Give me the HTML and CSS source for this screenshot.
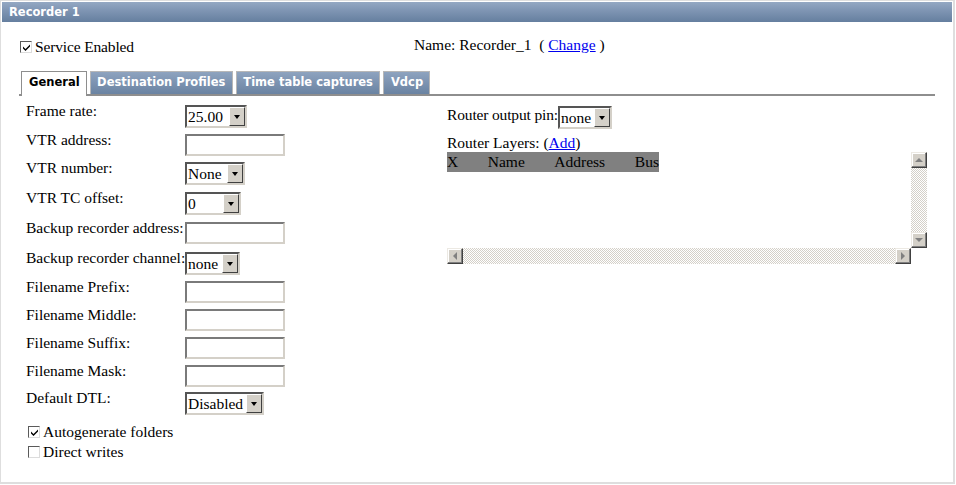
FILE: index.html
```html
<!DOCTYPE html>
<html>
<head>
<meta charset="utf-8">
<link rel="stylesheet" href="styles.css">
</head>
<body>
<div class="panel">
  <div class="titlebar">Recorder 1</div>
  <div class="service-row">
    <div class="check"><span class="cb checked"><svg viewBox="0 0 9 9" width="9" height="9"><path d="M1 3.5 L3.5 6 L8 1.5 L8 3.5 L3.5 8 L1 5.5 Z" fill="#000"/></svg></span>Service Enabled</div>
    <div class="name">Name: Recorder_1 &nbsp;( <a href="#">Change</a> )</div>
  </div>
  <div class="tabs">
    <div class="tab active">General</div>
    <div class="tab">Destination Profiles</div>
    <div class="tab">Time table captures</div>
    <div class="tab">Vdcp</div>
  </div>
  <div class="tab-body">
    <div class="left">
      <div class="form-grid">
        <div class="lbl">Frame rate:</div>
        <div class="ctl"><span class="select w62"><span class="sel-val">25.00</span><span class="sel-btn"><i></i></span></span></div>
        <div class="lbl">VTR address:</div>
        <div class="ctl"><span class="input"></span></div>
        <div class="lbl">VTR number:</div>
        <div class="ctl"><span class="select w60"><span class="sel-val">None</span><span class="sel-btn"><i></i></span></span></div>
        <div class="lbl">VTR TC offset:</div>
        <div class="ctl"><span class="select w56"><span class="sel-val">0</span><span class="sel-btn"><i></i></span></span></div>
        <div class="lbl">Backup recorder address:</div>
        <div class="ctl"><span class="input"></span></div>
        <div class="lbl">Backup recorder channel:</div>
        <div class="ctl"><span class="select w55"><span class="sel-val">none</span><span class="sel-btn"><i></i></span></span></div>
        <div class="lbl">Filename Prefix:</div>
        <div class="ctl"><span class="input"></span></div>
        <div class="lbl">Filename Middle:</div>
        <div class="ctl"><span class="input"></span></div>
        <div class="lbl">Filename Suffix:</div>
        <div class="ctl"><span class="input"></span></div>
        <div class="lbl">Filename Mask:</div>
        <div class="ctl"><span class="input"></span></div>
        <div class="lbl">Default DTL:</div>
        <div class="ctl"><span class="select w79"><span class="sel-val">Disabled</span><span class="sel-btn"><i></i></span></span></div>
      </div>
      <div class="checks">
        <div class="check"><span class="cb checked"><svg viewBox="0 0 9 9" width="9" height="9"><path d="M1 3.5 L3.5 6 L8 1.5 L8 3.5 L3.5 8 L1 5.5 Z" fill="#000"/></svg></span>Autogenerate folders</div>
        <div class="check"><span class="cb"></span>Direct writes</div>
      </div>
    </div>
    <div class="right">
      <div class="pin-row">Router output pin:<span class="select w54"><span class="sel-val">none</span><span class="sel-btn"><i></i></span></span></div>
      <div class="layers-title">Router Layers: (<a href="#">Add</a>)</div>
      <div class="scrollbox">
        <div class="scroll-main">
          <div class="viewport">
            <div class="layers-head"><span class="c-x">X</span><span class="c-name">Name</span><span class="c-addr">Address</span><span class="c-bus">Bus</span></div>
          </div>
          <div class="vbar">
            <span class="sbtn"><i class="arr up"></i></span>
            <span class="track"></span>
            <span class="sbtn"><i class="arr down"></i></span>
          </div>
        </div>
        <div class="hrow">
          <div class="hbar">
            <span class="sbtn"><i class="arr left"></i></span>
            <span class="track"></span>
            <span class="sbtn"><i class="arr right"></i></span>
          </div>
          <div class="corner"></div>
        </div>
      </div>
    </div>
  </div>
</div>
</body>
</html>
```
FILE: styles.css
```css
html, body {
  margin: 0;
  padding: 0;
  background: #ffffff;
}
body {
  font-family: "Liberation Serif", "Times New Roman", serif;
  font-size: 15.5px;
  color: #000;
  width: 956px;
  height: 485px;
  overflow: hidden;
}
a { color: #0000ee; text-decoration: underline; }

.panel {
  box-sizing: border-box;
  width: 955px;
  height: 484px;
  border: 2px solid #dedede;
  border-top-width: 1px;
  border-left-width: 1px;
  padding: 1px;
  background: #fff;
}

.titlebar {
  height: 20px;
  line-height: 20px;
  background: linear-gradient(#94a8c3, #8096b4 40%, #657f9f 100%);
  color: #fff;
  font-family: "DejaVu Sans", Verdana, sans-serif;
  font-weight: bold;
  font-size: 11.5px;
  padding-left: 7px;
}

.service-row {
  display: grid;
  grid-template-columns: 394px auto;
  margin: 14px 0 0 18px;
  height: 22px;
  line-height: 18px;
}
.service-row .check { letter-spacing: -0.15px; }
.check {
  display: flex;
  align-items: center;
  white-space: nowrap;
}
.cb {
  box-sizing: border-box;
  width: 12px;
  height: 12px;
  border: 1px solid;
  border-color: #5a5a5a #dcdcdc #dcdcdc #5a5a5a;
  background: #fff;
  margin-right: 3px;
  display: inline-flex;
  align-items: center;
  justify-content: center;
  flex: none;
}
.cb svg { display: block; }

.tabs {
  display: flex;
  gap: 3px;
  margin: 13px 17px 0 17px;
  padding-left: 2px;
  border-bottom: 2px solid #8e8e8e;
  height: 23px;
  align-items: flex-end;
}
.tab {
  box-sizing: border-box;
  height: 23px;
  line-height: 21px;
  padding: 0 6.5px;
  font-family: "DejaVu Sans", Verdana, sans-serif;
  font-weight: bold;
  font-size: 11.5px;
  color: #fff;
  background: linear-gradient(#8ea3bf, #6a83a2);
  border: 1px solid #b7b7b7;
  border-bottom: none;
  white-space: nowrap;
}
.tab.active {
  background: #fff;
  color: #000;
  border-color: #8e8e8e;
  height: 25px;
  margin-bottom: -2px;
  padding: 0 6px 0 7px;
}
.tab:last-child { padding: 0 6px 0 6.5px; }

.tab-body {
  display: grid;
  grid-template-columns: 421px auto;
  margin: 6px 0 0 24px;
}

.form-grid {
  display: grid;
  grid-template-columns: 159px auto;
  grid-template-rows: 29px 28px 30px 30px 30px 29px 28px 28px 28px 27px 28px;
  line-height: 18px;
}
.lbl { white-space: nowrap; }
.ctl { padding-top: 3px; }

.input {
  display: block;
  box-sizing: border-box;
  width: 100px;
  height: 22px;
  border: 2px solid;
  border-color: #7a7a7a #d4d0c8 #d4d0c8 #7a7a7a;
  background: #fff;
}

.select {
  display: inline-flex;
  box-sizing: border-box;
  height: 23px;
  border: 2px solid;
  border-color: #555 #d4d0c8 #d4d0c8 #555;
  background: #fff;
  vertical-align: top;
}
.w62 { width: 62px; }
.w60 { width: 60px; }
.w56 { width: 56px; }
.w55 { width: 55px; }
.w54 { width: 54px; }
.w79 { width: 79px; }
.sel-val {
  flex: 1;
  padding-left: 1px;
  line-height: 19px;
  overflow: hidden;
  white-space: nowrap;
}
.sel-btn {
  box-sizing: border-box;
  width: 16px;
  height: 19px;
  background: #d4d0c8;
  border: 1px solid;
  border-color: #fff #404040 #404040 #fff;
  display: flex;
  align-items: center;
  justify-content: center;
}
.sel-btn i {
  display: block;
  width: 0;
  height: 0;
  border-left: 3.5px solid transparent;
  border-right: 3.5px solid transparent;
  border-top: 4px solid #000;
}

.checks {
  margin-top: 5px;
  margin-left: 2px;
  line-height: 20px;
}

.pin-row {
  display: flex;
  align-items: flex-start;
  line-height: 18px;
  height: 34px;
  padding-top: 4px;
  box-sizing: border-box;
  letter-spacing: -0.15px;
}
.pin-row .select { letter-spacing: 0; }
.layers-title {
  line-height: 16px;
  height: 17px;
  margin-top: -1px;
}

.scrollbox {
  width: 480px;
  height: 112px;
  display: flex;
  flex-direction: column;
}
.scroll-main {
  display: flex;
  height: 96px;
}
.viewport {
  flex: 1;
  overflow: hidden;
}
.layers-head {
  display: flex;
  width: 212px;
  height: 20px;
  line-height: 20px;
  background: #808080;
  white-space: nowrap;
}
.c-x { width: 41px; }
.c-name { width: 67px; }
.c-addr { width: 81px; }

.vbar {
  width: 16px;
  display: flex;
  flex-direction: column;
}
.hrow { display: flex; height: 16px; }
.hbar { flex: 1; display: flex; }
.corner { width: 16px; background: #fff; }
.track {
  flex: 1;
  background-color: #fff;
  background-image: repeating-conic-gradient(#d4d0c8 0 25%, #fff 0 50%);
  background-size: 2px 2px;
}
.sbtn {
  box-sizing: border-box;
  width: 16px;
  height: 16px;
  background: #d4d0c8;
  border: 1px solid;
  border-color: #ece9e3 #404040 #404040 #ece9e3;
  box-shadow: inset -1px -1px #808080, inset 1px 1px #fff;
  display: flex;
  align-items: center;
  justify-content: center;
  flex: none;
}
.arr { display: block; width: 0; height: 0; }
.arr.up { border-left: 4px solid transparent; border-right: 4px solid transparent; border-bottom: 4px solid #808080; }
.arr.down { border-left: 4px solid transparent; border-right: 4px solid transparent; border-top: 4px solid #808080; }
.arr.left { border-top: 4px solid transparent; border-bottom: 4px solid transparent; border-right: 4px solid #808080; }
.arr.right { border-top: 4px solid transparent; border-bottom: 4px solid transparent; border-left: 4px solid #808080; }
```
